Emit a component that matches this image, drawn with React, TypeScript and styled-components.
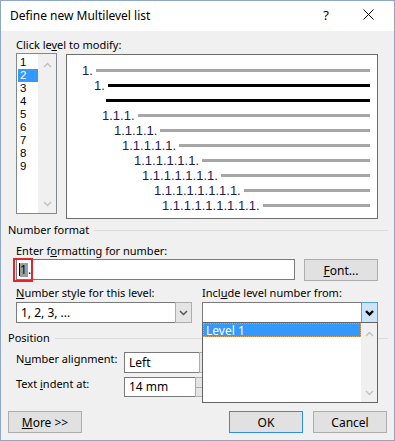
import React from "react";
import styled, { createGlobalStyle } from "styled-components";

const GlobalStyle = createGlobalStyle`
  html, body {
    margin: 0;
    padding: 0;
    background: #ffffff;
  }
  body {
    font-family: "Noto Sans", "Segoe UI", sans-serif;
    font-size: 11px;
    color: #000;
  }
`;

const Window = styled.div`
  width: 395px;
  height: 441px;
  box-sizing: border-box;
  border: 1px solid #8ea6c8;
  background: #f0f0f0;
  display: flex;
  flex-direction: column;
  overflow: hidden;
`;

const TitleBar = styled.div`
  height: 30px;
  flex-shrink: 0;
  background: #ffffff;
  display: flex;
  align-items: center;
  padding-left: 9px;
`;

const Title = styled.div`
  flex: 1;
  font-size: 12px;
  line-height: 16px;
  margin-top: -1px;
`;

const HelpGlyph = styled.div`
  width: 40px;
  text-align: center;
  font-size: 13px;
  margin-top: -2px;
`;

const CloseButton = styled.div`
  width: 44px;
  height: 30px;
  display: flex;
  align-items: center;
  justify-content: center;
  margin-right: 4px;
  margin-top: -4px;
`;

const Body = styled.div`
  flex: 1;
  position: relative;
  display: flex;
  flex-direction: column;
  padding: 6px 16px 0 15px;
`;

const Label = styled.div`
  line-height: 16px;
  white-space: nowrap;
`;

const Key = styled.span`
  text-decoration: underline;
  text-underline-offset: 1px;
`;

const TopRow = styled.div`
  display: flex;
  gap: 9px;
  align-items: flex-start;
`;

const LevelList = styled.div`
  width: 41px;
  height: 161px;
  box-sizing: border-box;
  border: 1px solid #828790;
  background: #ffffff;
  display: flex;
`;

const LevelItems = styled.div`
  width: 21px;
  padding-top: 2px;
`;

const LevelItem = styled.div<{ $selected?: boolean }>`
  height: 13px;
  line-height: 13px;
  margin-left: 1px;
  padding-left: 2px;
  font-family: "Liberation Sans", Arial, sans-serif;
  font-size: 11.5px;
  background: ${(p) => (p.$selected ? "#3399ff" : "transparent")};
  color: ${(p) => (p.$selected ? "#ffffff" : "#000")};
`;

const ListScroll = styled.div`
  width: 18px;
  background: #f0f0f0;
  display: flex;
  flex-direction: column;
  justify-content: space-between;
  align-items: center;
  padding: 8px 0 6px;
`;

const Preview = styled.div`
  width: 313px;
  height: 165px;
  box-sizing: border-box;
  margin-top: 1px;
  border: 1px solid #6e6e6e;
  background: #ffffff;
  padding: 8px 7px 0 0;
  display: flex;
  flex-direction: column;
`;

const PreviewRow = styled.div<{ $indent: number }>`
  height: 15px;
  display: flex;
  align-items: center;
  padding-left: ${(p) => p.$indent}px;
`;

const PreviewNum = styled.span`
  font-family: "Liberation Sans", Arial, sans-serif;
  font-size: 13px;
  line-height: 15px;
  color: #1d1d50;
  margin-right: 3px;
`;

const PreviewLine = styled.div<{ $dark?: boolean }>`
  flex: 1;
  height: 3px;
  background: ${(p) => (p.$dark ? "#000000" : "#a6a6a6")};
`;

const SectionHeader = styled.div<{ $top: number }>`
  display: flex;
  align-items: center;
  margin: ${(p) => p.$top}px -10px 0 -8px;
`;

const SectionRule = styled.div`
  flex: 1;
  height: 1px;
  background: #dadada;
  margin: 1px 0 0 5px;
`;

const FieldRow = styled.div`
  display: flex;
  gap: 9px;
  align-items: flex-start;
`;

const TextBox = styled.div`
  position: relative;
  width: 279px;
  height: 21px;
  box-sizing: border-box;
  border: 1px solid #7a7a7a;
  background: #ffffff;
  display: flex;
  align-items: center;
  padding-left: 2px;
  font-size: 12px;
`;

const Caret = styled.span`
  width: 1px;
  height: 13px;
  background: #000;
`;

const Selected = styled.span`
  background: #9d9d9d;
  line-height: 14px;
  padding: 0 1px 0 0;
`;

const Annotation = styled.div`
  position: absolute;
  left: -4px;
  top: -2px;
  width: 20px;
  height: 24px;
  box-sizing: border-box;
  border: 2px solid #e3262b;
`;

const PushButton = styled.div<{ $focused?: boolean; $width?: number }>`
  width: ${(p) => p.$width ?? 74}px;
  height: 22px;
  box-sizing: border-box;
  border: 1px solid ${(p) => (p.$focused ? "#2f8ee0" : "#adadad")};
  background: #e1e1e1;
  display: flex;
  align-items: center;
  justify-content: center;
  font-size: 12px;
`;

const Columns = styled.div`
  display: flex;
  gap: 10px;
  margin-top: 4px;
`;

const Column = styled.div`
  width: 176px;
  display: flex;
  flex-direction: column;
  gap: 1px;
`;

const ComboBox = styled.div<{ $width?: number }>`
  position: relative;
  width: ${(p) => p.$width ?? 176}px;
  height: 21px;
  box-sizing: border-box;
  border: 1px solid #7a7a7a;
  background: #ffffff;
  display: flex;
  font-size: 12px;
`;

const ComboText = styled.div`
  flex: 1;
  padding-left: 4px;
  line-height: 19px;
`;

const ComboButton = styled.div<{ $active?: boolean }>`
  width: 17px;
  margin: -1px -1px -1px 0;
  box-sizing: border-box;
  border: 1px solid ${(p) => (p.$active ? "#569de5" : "#adadad")};
  background: ${(p) => (p.$active ? "#cce4f7" : "#e5e5e5")};
  display: flex;
  align-items: center;
  justify-content: center;
`;

const Popup = styled.div`
  position: absolute;
  left: -1px;
  top: 19px;
  width: 176px;
  height: 81px;
  box-sizing: border-box;
  border: 1px solid #646464;
  background: #ffffff;
  display: flex;
  z-index: 2;
`;

const PopupList = styled.div`
  flex: 1;
`;

const PopupItem = styled.div`
  height: 14px;
  line-height: 13px;
  box-sizing: border-box;
  border: 1px dotted #d9a46a;
  background: #3399ff;
  color: #ffffff;
  padding-left: 2px;
`;

const PopupScroll = styled.div`
  width: 16px;
  background: #f0f0f0;
  display: flex;
  flex-direction: column;
  justify-content: space-between;
  align-items: center;
  padding: 8px 0 6px;
`;

const PosRows = styled.div`
  display: flex;
  flex-direction: column;
  gap: 4px;
  margin-top: 6px;
`;

const PosRow = styled.div`
  display: flex;
  align-items: flex-start;
`;

const PosLabel = styled.div`
  width: 108px;
  line-height: 16px;
  margin-top: -1px;
`;

const SpinBox = styled.div`
  display: flex;
  height: 20px;
`;

const SpinText = styled.div`
  width: 72px;
  box-sizing: border-box;
  border: 1px solid #7a7a7a;
  background: #ffffff;
  padding-left: 4px;
  line-height: 18px;
  font-size: 12px;
`;

const SpinButtons = styled.div`
  width: 16px;
  display: flex;
  flex-direction: column;
`;

const SpinHalf = styled.div`
  flex: 1;
  border: 1px solid #adadad;
  background: #e5e5e5;
  margin-left: -1px;
  & + & {
    margin-top: -1px;
  }
`;

const Footer = styled.div`
  display: flex;
  align-items: center;
  margin: 14px -9px 0 -8px;
`;

const Spacer = styled.div`
  flex: 1;
`;

const FooterRight = styled.div`
  display: flex;
  gap: 10px;
`;

function Chevron({ color, width = 1.5, up }: { color: string; width?: number; up?: boolean }) {
  return (
    <svg width="9" height="6" viewBox="0 0 9 6">
      <polyline
        points={up ? "1,5 4.5,1.5 8,5" : "1,1 4.5,4.5 8,1"}
        fill="none"
        stroke={color}
        strokeWidth={width}
      />
    </svg>
  );
}

const previewRows = [
  { indent: 15, text: "1.", dark: false },
  { indent: 27, text: "1.", dark: true },
  { indent: 39, text: "", dark: true },
  { indent: 35, text: "1.1.1.", dark: false },
  { indent: 47, text: "1.1.1.1.", dark: false },
  { indent: 55, text: "1.1.1.1.1.", dark: false },
  { indent: 67, text: "1.1.1.1.1.1.", dark: false },
  { indent: 75, text: "1.1.1.1.1.1.1.", dark: false },
  { indent: 87, text: "1.1.1.1.1.1.1.1.", dark: false },
  { indent: 95, text: "1.1.1.1.1.1.1.1.1.", dark: false },
];

export default function App() {
  return (
    <>
      <GlobalStyle />
      <Window>
        <TitleBar>
          <Title>Define new Multilevel list</Title>
          <HelpGlyph>?</HelpGlyph>
          <CloseButton>
            <svg width="11" height="11" viewBox="0 0 11 11">
              <path d="M0.5 0.5 L10.5 10.5 M10.5 0.5 L0.5 10.5" stroke="#000" strokeWidth="1" />
            </svg>
          </CloseButton>
        </TitleBar>

        <Body>
          <Label>
            Click le<Key>v</Key>el to modify:
          </Label>
          <TopRow>
            <LevelList>
              <LevelItems>
                {[1, 2, 3, 4, 5, 6, 7, 8, 9].map((n) => (
                  <LevelItem key={n} $selected={n === 2}>
                    {n}
                  </LevelItem>
                ))}
              </LevelItems>
              <ListScroll>
                <Chevron color="#c2c2c2" up />
                <Chevron color="#c2c2c2" />
              </ListScroll>
            </LevelList>
            <Preview>
              {previewRows.map((row, i) => (
                <PreviewRow key={i} $indent={row.indent}>
                  {row.text && <PreviewNum>{row.text}</PreviewNum>}
                  <PreviewLine $dark={row.dark} />
                </PreviewRow>
              ))}
            </Preview>
          </TopRow>

          <SectionHeader $top={3}>
            <Label>Number format</Label>
            <SectionRule />
          </SectionHeader>
          <Label style={{ marginTop: 5 }}>
            Enter f<Key>o</Key>rmatting for number:
          </Label>
          <FieldRow>
            <TextBox>
              <Caret />
              <Selected>1</Selected>.
              <Annotation />
            </TextBox>
            <PushButton>
              <span>
                <Key>F</Key>ont...
              </span>
            </PushButton>
          </FieldRow>

          <Columns>
            <Column>
              <Label>
                <Key>N</Key>umber style for this level:
              </Label>
              <ComboBox>
                <ComboText>1, 2, 3, ...</ComboText>
                <ComboButton>
                  <Chevron color="#555" />
                </ComboButton>
              </ComboBox>
            </Column>
            <Column>
              <Label>
                Incl<Key>u</Key>de level number from:
              </Label>
              <ComboBox>
                <ComboText />
                <ComboButton $active>
                  <Chevron color="#000" width={2.4} />
                </ComboButton>
                <Popup>
                  <PopupList>
                    <PopupItem>Level 1</PopupItem>
                  </PopupList>
                  <PopupScroll>
                    <Chevron color="#c2c2c2" up />
                    <Chevron color="#c2c2c2" />
                  </PopupScroll>
                </Popup>
              </ComboBox>
            </Column>
          </Columns>

          <SectionHeader $top={7}>
            <Label>Position</Label>
            <SectionRule />
          </SectionHeader>
          <PosRows>
            <PosRow>
              <PosLabel>
                N<Key>u</Key>mber alignment:
              </PosLabel>
              <ComboBox $width={92}>
                <ComboText>Left</ComboText>
                <ComboButton>
                  <Chevron color="#555" />
                </ComboButton>
              </ComboBox>
            </PosRow>
            <PosRow>
              <PosLabel>
                Text <Key>i</Key>ndent at:
              </PosLabel>
              <SpinBox>
                <SpinText>14 mm</SpinText>
                <SpinButtons>
                  <SpinHalf />
                  <SpinHalf />
                </SpinButtons>
              </SpinBox>
            </PosRow>
          </PosRows>

          <Footer>
            <PushButton $width={74}>
              <span>
                <Key>M</Key>ore &gt;&gt;
              </span>
            </PushButton>
            <Spacer />
            <FooterRight>
              <PushButton $focused>OK</PushButton>
              <PushButton>Cancel</PushButton>
            </FooterRight>
          </Footer>
        </Body>
      </Window>
    </>
  );
}
